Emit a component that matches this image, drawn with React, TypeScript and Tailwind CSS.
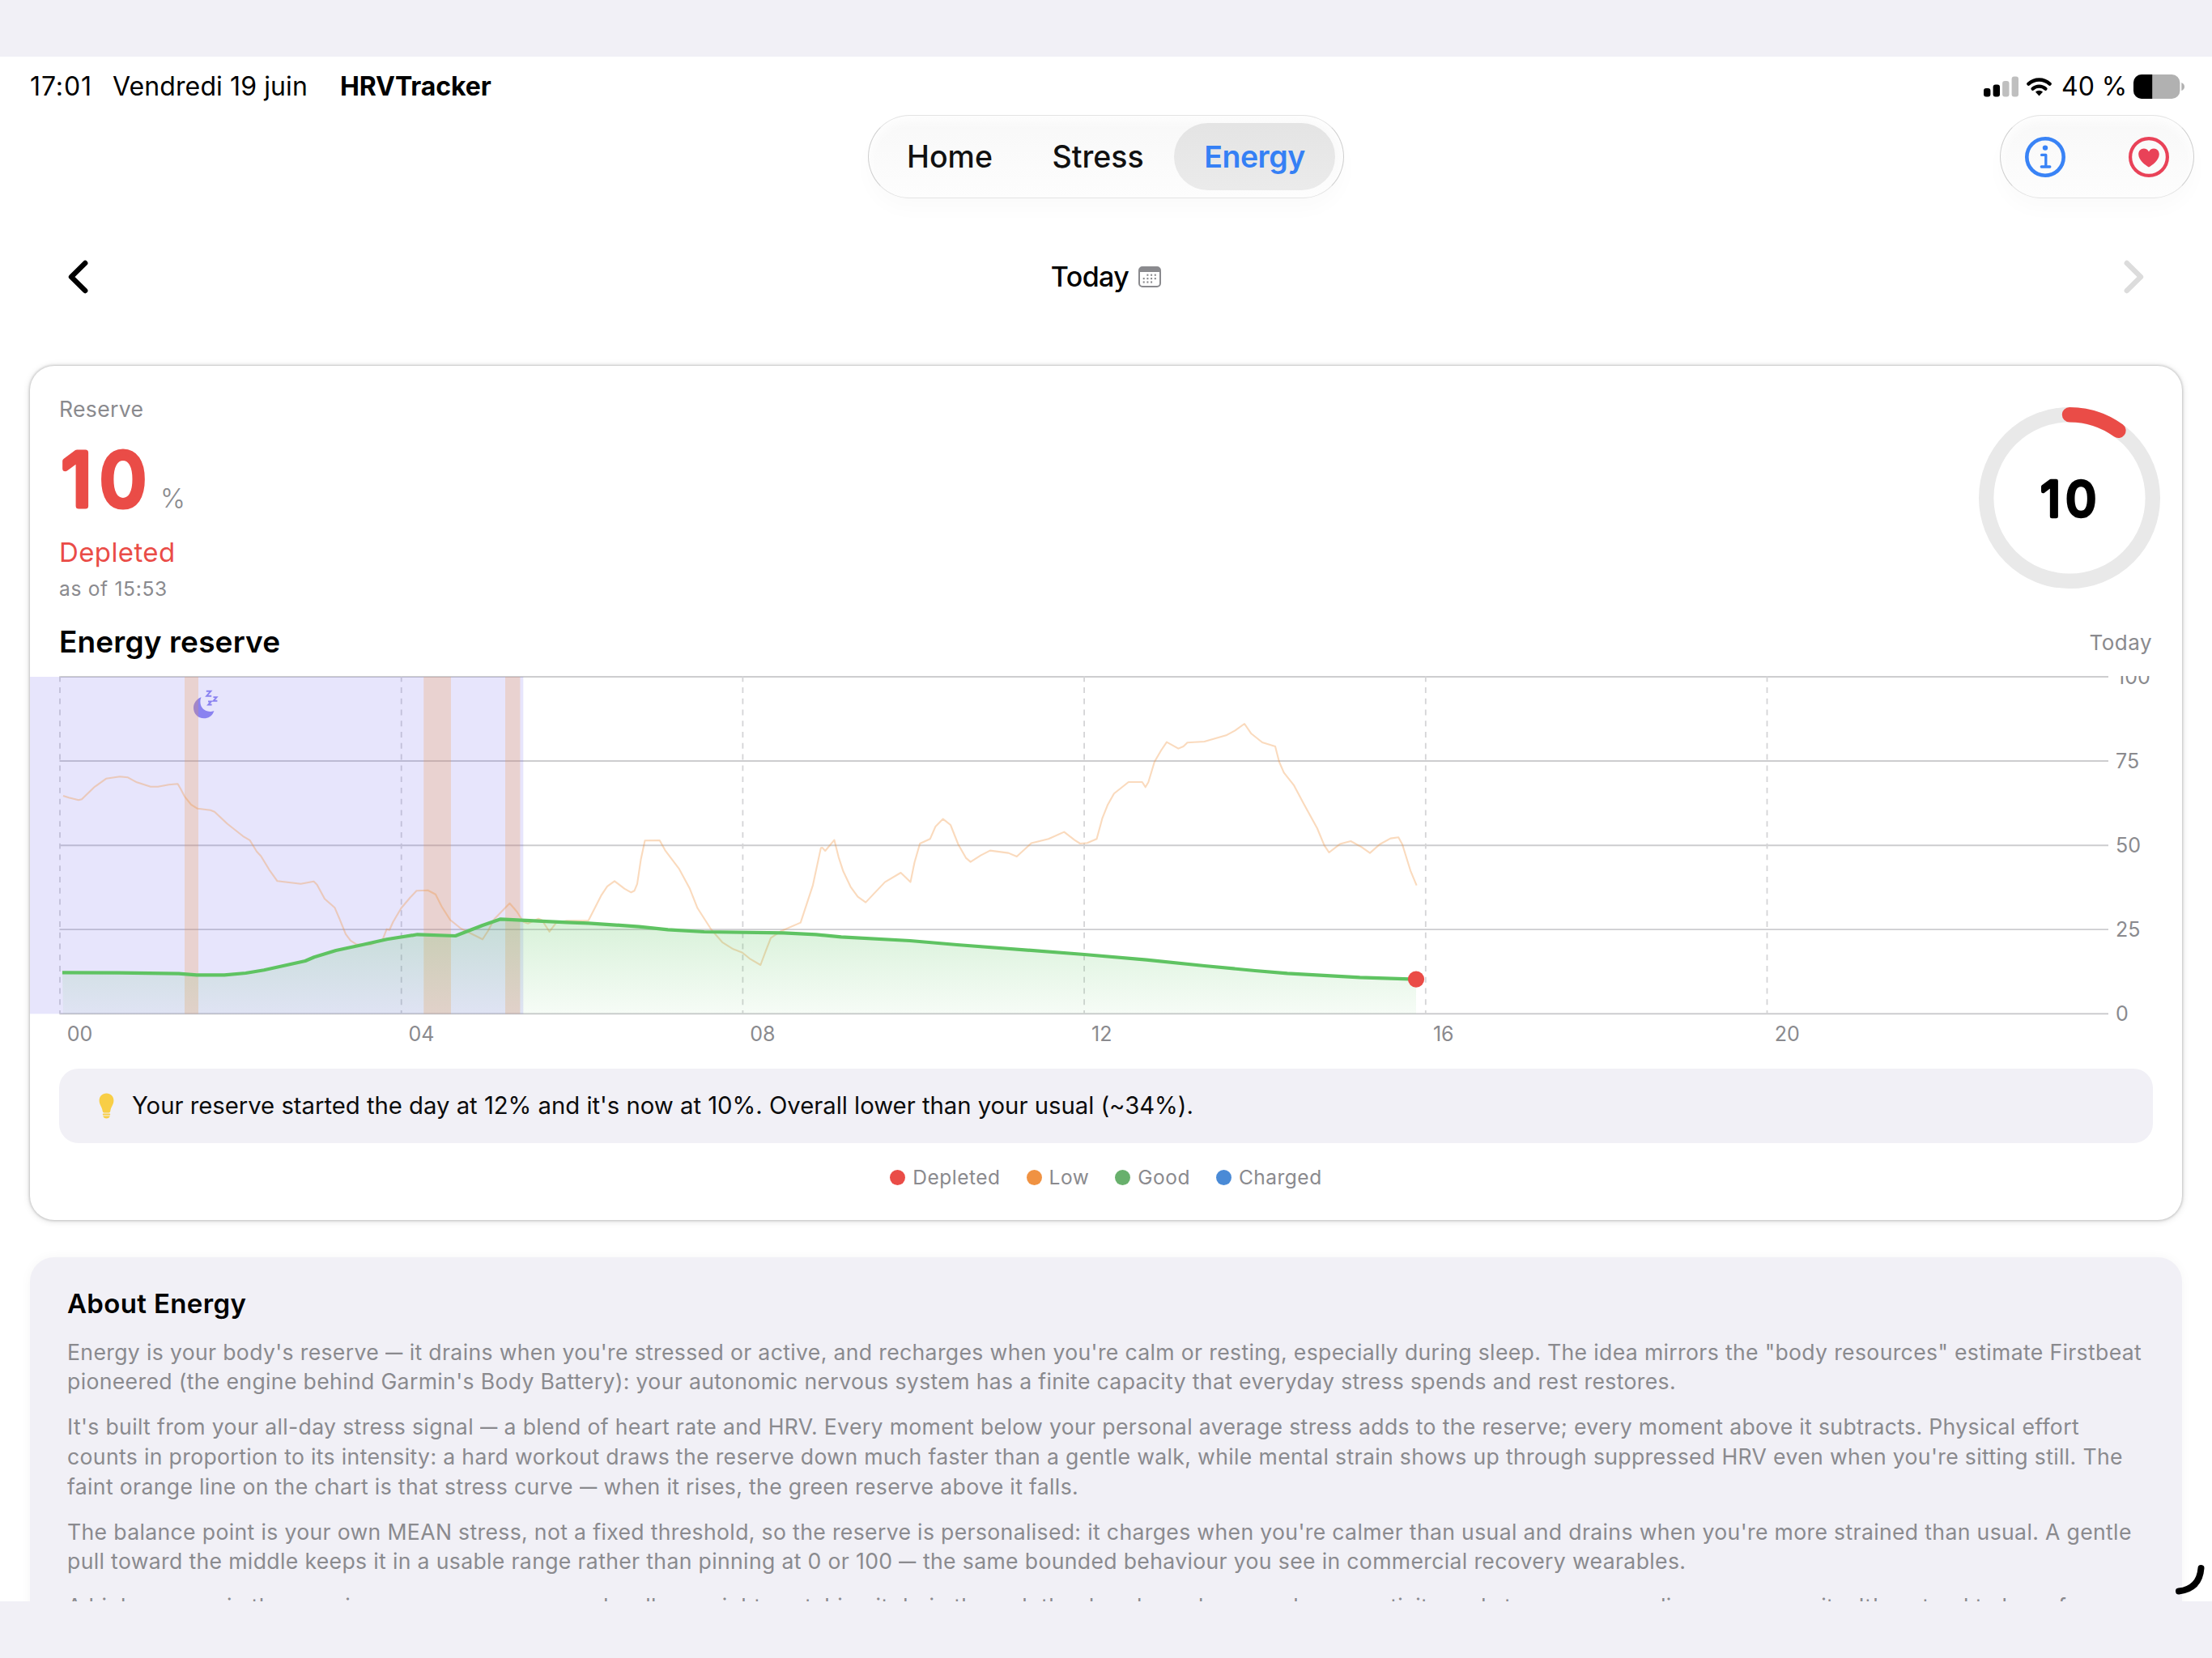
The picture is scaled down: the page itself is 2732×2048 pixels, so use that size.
import React from 'react';

type Point = [number, number];

const TABS = ['Home', 'Stress', 'Energy'];

const LEGEND = [
  { label: 'Depleted', dot: 'bg-[#ea4c47]' },
  { label: 'Low', dot: 'bg-[#f09242]' },
  { label: 'Good', dot: 'bg-[#68b06c]' },
  { label: 'Charged', dot: 'bg-[#4a8ad6]' },
];

// Explicit lines so the copy breaks the same way on every device
const ABOUT = [
  [
    'Energy is your body\'s reserve — it drains when you\'re stressed or active, and recharges when you\'re calm or resting, especially during sleep. The idea mirrors the "body resources" estimate Firstbeat',
    "pioneered (the engine behind Garmin's Body Battery): your autonomic nervous system has a finite capacity that everyday stress spends and rest restores.",
  ],
  [
    "It's built from your all-day stress signal — a blend of heart rate and HRV. Every moment below your personal average stress adds to the reserve; every moment above it subtracts. Physical effort",
    "counts in proportion to its intensity: a hard workout draws the reserve down much faster than a gentle walk, while mental strain shows up through suppressed HRV even when you're sitting still. The",
    'faint orange line on the chart is that stress curve — when it rises, the green reserve above it falls.',
  ],
  [
    "The balance point is your own MEAN stress, not a fixed threshold, so the reserve is personalised: it charges when you're calmer than usual and drains when you're more strained than usual. A gentle",
    'pull toward the middle keeps it in a usable range rather than pinning at 0 or 100 — the same bounded behaviour you see in commercial recovery wearables.',
  ],
  [
    "A higher curve in the morning means you recovered well overnight; watching it drain through the day shows how much your activity and stress are spending your capacity. It's natural to have few",
  ],
];

const STRESS: Point[] = [
  [78, 982.7], [85, 985], [97, 988], [101, 987], [117, 971.5], [131, 961.5], [148, 959], [158, 960], [169, 966],
  [186, 971.5], [195, 971.5], [208.5, 969], [219.5, 968], [223, 974], [228, 983.5], [236, 993.5], [244, 998.5],
  [260, 1000.5], [265, 1002.5], [281, 1017.5], [300, 1032.5], [308.5, 1037.5], [317, 1051.5], [322.5, 1057.5],
  [332.5, 1074], [342.5, 1088], [371.5, 1091.5], [387.5, 1088.5], [391.5, 1092.5], [401, 1110], [413.5, 1121],
  [419.5, 1135], [427, 1153.5], [433, 1161.5], [440, 1166], [457.5, 1166.5], [472.5, 1160.5], [477.5, 1147.5],
  [481, 1148.5], [485.5, 1138.5], [495.5, 1121.5], [506.5, 1108.5], [514.5, 1100], [528.5, 1099.5], [538, 1104.5],
  [545.5, 1119.5], [556, 1136], [569, 1146.5], [596, 1160], [602.5, 1150], [610.5, 1135], [629.5, 1115.5],
  [638.5, 1126], [646.5, 1138.5], [652, 1140.5], [665, 1134.5], [669.5, 1136.5], [678.5, 1150.5], [686.5, 1140],
  [700, 1137], [726.8, 1136.7], [743, 1105], [750, 1094.5], [759, 1088], [771.5, 1097.5], [779.5, 1102],
  [783.5, 1100], [787, 1091.5], [791.5, 1061.5], [796.5, 1038], [814.7, 1037.7], [821.5, 1050], [838.5, 1072.5],
  [852, 1097.5], [861.5, 1121.5], [878.5, 1148], [892, 1163.5], [905.5, 1172], [917, 1176.5], [925.5, 1183.5],
  [939.3, 1191.7], [945.5, 1175], [952, 1158.3], [964.3, 1150], [988.8, 1139.3], [1004, 1093], [1013.8, 1047.3],
  [1015.5, 1046.7], [1019.2, 1050.7], [1030.4, 1037.3], [1035.7, 1058.3], [1041.5, 1076], [1050.5, 1095],
  [1059.4, 1107.3], [1069.2, 1114.3], [1092.9, 1089.3], [1112.5, 1077.7], [1124.5, 1089.3], [1129.5, 1065],
  [1136.2, 1041.7], [1148.7, 1036], [1155.4, 1020.7], [1164.7, 1011.3], [1174, 1018.7], [1183.5, 1042.7],
  [1192.9, 1059.3], [1198.7, 1064.3], [1211.2, 1056.3], [1222.8, 1050.3], [1245.5, 1053.3], [1255.8, 1057.7],
  [1273.7, 1041.3], [1295, 1036], [1314.3, 1027.3], [1327.2, 1037.3], [1334, 1041.7], [1342.9, 1041],
  [1354.5, 1036], [1361.6, 1010], [1367.9, 994.3], [1375.9, 980], [1393.8, 965.7], [1410.7, 965.7], [1414.7, 972],
  [1418.3, 966], [1425.9, 940.7], [1434, 926.7], [1441, 916.3], [1455.4, 924.3], [1461.6, 921.7], [1466.5, 917],
  [1487.5, 915.7], [1514.3, 908], [1525.4, 902], [1537, 893.7], [1545.5, 906], [1559, 916.7], [1575, 921.7],
  [1579.9, 940.7], [1585.7, 954], [1597.8, 969.3], [1610.3, 992.7], [1626.8, 1022.7], [1635.7, 1044],
  [1641.5, 1052.7], [1654.9, 1042.3], [1668.3, 1038.7], [1681.7, 1046], [1692, 1053.3], [1704, 1042.7],
  [1717.4, 1035.3], [1727.2, 1034], [1732, 1042.7], [1742, 1075], [1749.6, 1093.3],
];

const RESERVE: Point[] = [
  [77, 1201], [147, 1201.3], [221, 1202.3], [243, 1204], [277, 1204], [303.5, 1201.7], [326, 1198], [377, 1186.7],
  [388, 1182], [415, 1173.7], [446.5, 1167], [477.7, 1160], [515.6, 1154], [562.5, 1155.7], [596, 1142.7],
  [618.3, 1135], [700, 1139], [726.8, 1140], [789.3, 1144.3], [825, 1148], [869.6, 1150.7], [967.9, 1152],
  [1008, 1154], [1039, 1157], [1124, 1161.7], [1182, 1166.7], [1339.3, 1178.7], [1416, 1185.3], [1487.5, 1192.7],
  [1550, 1198.7], [1590, 1202], [1679.5, 1207], [1749, 1209.3],
];

const toPath = (points: Point[]) => points.map(([x, y], i) => `${i ? 'L' : 'M'}${x} ${y}`).join(' ');

const StatusBar: React.FC = () => (
  <div className="flex h-[72px] items-center justify-between pl-[37px] pr-[33px] pt-[2px] text-[32px] leading-10 text-black">
    <div className="flex items-center">
      <span className="w-[102px] tracking-[0.9px]">17:01</span>
      <span className="w-[281px] tracking-[0.1px]">Vendredi 19 juin</span>
      <span className="font-bold tracking-[-0.1px]">HRVTracker</span>
    </div>
    <div className="flex items-center">
      <svg width="43" height="26" viewBox="0 0 43 26">
        <rect x="0" y="15" width="8.4" height="10.6" rx="3" />
        <rect x="11.6" y="10.4" width="8.4" height="15.2" rx="3" />
        <rect x="23.1" y="6" width="8.4" height="19.6" rx="3" fill="#bfbfbf" />
        <rect x="34.6" y="0.4" width="8.4" height="25.2" rx="3" fill="#bfbfbf" />
      </svg>
      <svg className="ml-[10px]" width="31" height="24" viewBox="0 0 31 24" fill="none" stroke="#000" strokeWidth="4.4">
        <path d="M2.4 8.6 A19.4 19.4 0 0 1 28.6 8.6" strokeLinecap="round" />
        <path d="M7.6 14.6 A12 12 0 0 1 23.4 14.6" strokeLinecap="round" />
        <path d="M15.5 23.4 L10.9 18.6 A6.6 6.6 0 0 1 20.1 18.6 Z" fill="#000" stroke="none" />
      </svg>
      <span className="ml-[12px] w-[89px] whitespace-nowrap">40 %</span>
      <svg width="64" height="30" viewBox="0 0 64 30">
        <clipPath id="battery">
          <rect width="57.4" height="30" rx="10" />
        </clipPath>
        <g clipPath="url(#battery)">
          <rect width="58" height="30" fill="#b1b1b1" />
          <rect width="23.2" height="30" />
        </g>
        <path d="M59.3 10 Q63 11.5 63 15 Q63 18.5 59.3 20 Z" fill="#b1b1b1" />
      </svg>
    </div>
  </div>
);

const pill =
  'flex h-[103px] items-center rounded-full border border-[#e3e3e3] border-x-[#cfcfcf] bg-gradient-to-b from-[#f8f8f8] to-[#fdfdfd] shadow-[0_14px_24px_rgba(0,0,0,0.02),inset_0_6px_14px_rgba(255,255,255,0.9)]';

const TopNav: React.FC = () => (
  <div className="grid grid-cols-[1fr_auto_1fr] pl-[22px] pr-[22px]">
    <span />
    <nav className={`${pill} w-[588px] pl-[10px] text-[37.5px] font-medium text-[#111]`}>
      {TABS.map((tab) => (
        <span
          key={tab}
          className={
            tab === 'Energy'
              ? 'ml-auto mr-[10px] flex h-[83px] w-[199px] items-center justify-center rounded-full bg-gradient-to-b from-[#e4e4e4] to-[#ebebeb] pt-px font-semibold tracking-[-0.5px] text-[#3580f5]'
              : tab === 'Home'
                ? 'ml-[37px] w-[179.5px] pt-px'
                : 'pt-px'
          }
        >
          {tab}
        </span>
      ))}
    </nav>
    <div className={`${pill} w-[240px] justify-between justify-self-end px-[30px]`}>
      <svg width="50" height="50" viewBox="0 0 50 50" fill="none" stroke="#3983f6">
        <circle cx="25" cy="25" r="22.7" strokeWidth="4.6" />
        <circle cx="25" cy="13.6" r="3.2" fill="#3983f6" stroke="none" />
        <path d="M20.6 22.4 H25.8 V37 M20.3 37 H30.8" strokeWidth="3.3" strokeLinecap="round" strokeLinejoin="round" />
      </svg>
      <svg width="50" height="50" viewBox="0 0 50 50" fill="none">
        <circle cx="25" cy="25" r="22.9" stroke="#e94258" strokeWidth="4.2" />
        <path
          d="M25 37.6 C21 35.4 12.2 29 12.2 21.6 C12.2 17.4 15 14.4 18.7 14.4 C21.6 14.4 23.9 16 25 18.4 C26.1 16 28.4 14.4 31.3 14.4 C35 14.4 37.8 17.4 37.8 21.6 C37.8 29 29 35.4 25 37.6 Z"
          fill="#e94258"
        />
      </svg>
    </div>
  </div>
);

const DayPicker: React.FC = () => (
  <div className="flex h-[193px] items-center justify-between pl-[84px] pr-[84px]">
    <svg width="25" height="42" viewBox="0 0 25 42" fill="none">
      <path d="M21.2 4 L4 21 L21.2 38" stroke="#000" strokeWidth="6.4" strokeLinecap="round" strokeLinejoin="round" />
    </svg>
    <div className="flex items-center gap-[12px] text-[34px] font-medium tracking-[-0.6px] text-black">
      <span>Today</span>
      <svg width="28" height="26" viewBox="0 0 28 26">
        <rect x="1" y="1" width="26" height="24" rx="4" fill="none" stroke="#8a8a8e" strokeWidth="2" />
        <path d="M1 7 V5 Q1 1 5 1 H23 Q27 1 27 5 V7 Z" fill="#8a8a8e" />
        <g fill="#8a8a8e">
          {[11, 15.7, 20.4].map((x) => <rect key={x} x={x - 0.6} y="9.6" width="2" height="2.2" />)}
          {[6.3, 11, 15.7, 20.4].map((x) => <rect key={x} x={x - 0.6} y="14" width="2" height="2.2" />)}
          {[6.3, 11, 15.7].map((x) => <rect key={x} x={x - 0.6} y="18.4" width="2" height="2.2" />)}
        </g>
      </svg>
    </div>
    <svg width="25" height="42" viewBox="0 0 25 42" fill="none">
      <path d="M3.8 4 L21 21 L3.8 38" stroke="#dcdcdc" strokeWidth="6.4" strokeLinecap="round" strokeLinejoin="round" />
    </svg>
  </div>
);

const Gauge: React.FC = () => (
  <svg width="224" height="224" viewBox="0 0 224 224">
    <circle cx="112" cy="112" r="102.8" fill="none" stroke="#e9e9e9" strokeWidth="18.4" />
    <path
      d="M112 9.2 A102.8 102.8 0 0 1 172.4 28.8"
      fill="none"
      stroke="#ea4c47"
      strokeWidth="18.4"
      strokeLinecap="round"
    />
    <text
      x="76.5 107.3"
      y="135"
      className="font-['Inter',sans-serif] text-[60px]"
      stroke="#000"
      strokeWidth="4.6"
      strokeLinejoin="round"
    >
      10
    </text>
  </svg>
);

const GRID_Y = [835.7, 939.7, 1043.9, 1147.8, 1252];
const HOURS = ['00', '04', '08', '12', '16', '20'];

const ReserveChart: React.FC = () => {
  const line = toPath(RESERVE);
  return (
    <svg width="2658" height="466" viewBox="37 834.7 2658 466" className="block">
      <defs>
        <linearGradient id="reserveFill" gradientUnits="userSpaceOnUse" x1="0" y1="1135" x2="0" y2="1252">
          <stop offset="0" stopColor="#4cc050" stopOpacity="0.22" />
          <stop offset="1" stopColor="#4cc050" stopOpacity="0.05" />
        </linearGradient>
      </defs>

      {GRID_Y.map((y) => (
        <line key={y} x1="73.5" x2="2604" y1={y} y2={y} stroke="#cdcdcf" strokeWidth="1.9" />
      ))}
      {HOURS.map((hour, i) => (
        <line
          key={hour}
          x1={74 + i * 421.7}
          x2={74 + i * 421.7}
          y1="835"
          y2="1252"
          stroke="#d4d4d6"
          strokeWidth="1.8"
          strokeDasharray="6.9 6.86"
        />
      ))}

      {/* Sleep window with its marker */}
      <rect x="37" y="835.7" width="609.3" height="416.3" fill="#5b4bea" fillOpacity="0.145" />
      <path
        d="M247.6 861.2 C242.4 863.6 239 868.4 239 874.2 C239 881.4 244.6 887 251.8 887 C257.8 887 262.8 883.4 264.4 877.6 C262.6 878.4 261 878.6 259.4 878.6 C252.4 878.6 247.4 873.6 247.4 866.8 C247.4 864.8 247.6 862.8 248.6 861.2 Z"
        fill="#8a82f0"
      />
      <g fill="none" stroke="#8a82f0" strokeWidth="1.9">
        <path d="M254.8 853.4 H260.4 L255.2 859.4 H261.2" />
        <path d="M263.4 860.8 H267.6 L263.6 865.4 H268.4" />
        <path d="M257 866.2 H260.8 L257.2 870.2 H261.6" />
      </g>

      {/* Awakenings */}
      {[[228, 17], [523.3, 33.7], [624, 18.4]].map(([x, width]) => (
        <rect key={x} x={x} y="835.7" width={width} height="416.3" fill="#f0943f" fillOpacity="0.23" />
      ))}

      <path d={toPath(STRESS)} fill="none" stroke="#f0943f" strokeOpacity="0.34" strokeWidth="2.1" strokeLinejoin="round" />
      <path d={`${line} L1749 1252 L78 1252 Z`} fill="url(#reserveFill)" />
      <path d={line} fill="none" stroke="#5fc362" strokeWidth="4.2" strokeLinejoin="round" />
      <circle cx="1749" cy="1209.3" r="10.1" fill="#ea4c47" />

      <g className="fill-[#8a8a8e] font-['Inter',sans-serif] text-[25px]">
        <text x="2614" y="844.5">100</text>
        <text x="2613" y="949">75</text>
        <text x="2613" y="1053">50</text>
        <text x="2613" y="1157">25</text>
        <text x="2613" y="1261">0</text>
        {HOURS.map((hour, i) => (
          <text key={hour} x={82.7 + i * 421.8} y="1286">{hour}</text>
        ))}
      </g>
    </svg>
  );
};

const EnergyCard: React.FC = () => (
  <section className="mx-[37px] mt-[14px] flex h-[1055px] flex-col overflow-hidden rounded-[30px] bg-white shadow-[0_0_3px_1px_rgba(0,0,0,0.18),0_1px_10px_rgba(0,0,0,0.14)]">
    <div className="flex h-[297px] justify-between pl-[36px] pr-[27px]">
      <div className="flex flex-col pt-[35px] text-[#8a8a8e]">
        <span className="text-[26.6px] leading-[36px] tracking-[0.3px]">Reserve</span>
        <div className="flex h-[136px] items-center">
          <svg width="126" height="100" viewBox="0 0 126 100" className="overflow-visible">
            <text
              x="3.5 50.3"
              y="83.5"
              className="fill-[#ea4c47] font-['Inter',sans-serif] text-[91px]"
              stroke="#ea4c47"
              strokeWidth="7.2"
              strokeLinejoin="round"
            >
              10
            </text>
          </svg>
          <span className="-ml-[1px] mt-[47px] text-[33px] font-light leading-[40px]">%</span>
        </div>
        <span className="text-[33px] leading-[46px] tracking-[0.4px] text-[#ea4c47]">Depleted</span>
        <span className="text-[24.5px] leading-[44px] tracking-[0.7px]">as of 15:53</span>
      </div>
      <div className="pt-[51px]">
        <Gauge />
      </div>
    </div>
    <div className="mb-[20px] mt-[22px] flex h-[44px] items-center justify-between pl-[36px] pr-[37px]">
      <h2 className="text-[37px] font-semibold tracking-[0.15px] text-black">Energy reserve</h2>
      <span className="text-[26px] tracking-[0.5px] text-[#8a8a8e]">Today</span>
    </div>
    <ReserveChart />
    <div className="mx-[36px] mt-[19px] flex h-[92px] items-center rounded-[24px] bg-[#f1f0f6] pl-[49px]">
      <svg width="19" height="32" viewBox="0 0 19 32" fill="#f8ce46">
        <path d="M9.5 0.5 C4.4 0.5 0.6 4.3 0.6 9.2 C0.6 14.8 4.2 17 4.7 22.6 Q4.8 24.4 6.4 24.4 H12.6 Q14.2 24.4 14.3 22.6 C14.8 17 18.4 14.8 18.4 9.2 C18.4 4.3 14.6 0.5 9.5 0.5 Z" />
        <rect x="4.8" y="25.6" width="9.4" height="2" rx="1" />
        <path d="M5.2 28.6 H13.8 Q13 31.6 9.5 31.6 Q6 31.6 5.2 28.6 Z" />
      </svg>
      <p className="ml-[22px] whitespace-nowrap text-[29.3px] tracking-[-0.02px] text-[#0b0b0b]">
        Your reserve started the day at 12% and it's now at 10%. Overall lower than your usual (~34%).
      </p>
    </div>
    <div className="mt-[23px] flex h-[39px] items-center justify-center gap-[32px] text-[24.5px] tracking-[0.5px] text-[#8a8a8e]">
      {LEGEND.map(({ label, dot }) => (
        <span key={label} className="flex items-center gap-[9px]">
          <span className={`size-[19px] rounded-full ${dot}`} />
          {label}
        </span>
      ))}
    </div>
  </section>
);

// Inter's em dash is wider than the rest of the copy wants, so it is narrowed
const AboutLine: React.FC<{ text: string }> = ({ text }) => (
  <p className="whitespace-nowrap">
    {text.split('—').map((part, i) => (
      <React.Fragment key={part}>
        {i > 0 && <span className="-mr-[5px] inline-block origin-left scale-x-80">—</span>}
        {part}
      </React.Fragment>
    ))}
  </p>
);

const AboutCard: React.FC = () => (
  <section className="mx-[37px] mt-[46px] h-[500px] rounded-[30px] bg-[#f1f0f6] pl-[46px] pt-[34px] shadow-[0_0_14px_rgba(0,0,0,0.04)]">
    <h3 className="text-[33px] font-semibold leading-[46px] tracking-[0.35px] text-black">About Energy</h3>
    <div className="mt-[18.5px] flex flex-col gap-[19.3px] text-[26.6px] leading-[36.7px] tracking-[0.345px] text-[#8a8a8e]">
      {ABOUT.map((lines) => (
        <div key={lines[0]}>
          {lines.map((text) => (
            <AboutLine key={text} text={text} />
          ))}
        </div>
      ))}
    </div>
  </section>
);

const App: React.FC = () => (
  <div className="h-[2048px] w-[2732px] overflow-hidden bg-[#f1f0f6] py-[70px] font-['Inter',sans-serif]">
    <main className="relative h-[1908px] overflow-hidden bg-white">
      <StatusBar />
      <TopNav />
      <DayPicker />
      <EnergyCard />
      <AboutCard />
      {/* Corner handle for resizing the window */}
      <svg className="absolute bottom-[7px] right-[8px]" width="40" height="40" viewBox="0 0 40 40" fill="none">
        <path d="M34.5 6 Q32.5 31.5 7 34.5" stroke="#000" strokeWidth="8" strokeLinecap="round" />
      </svg>
    </main>
  </div>
);

export default App;
